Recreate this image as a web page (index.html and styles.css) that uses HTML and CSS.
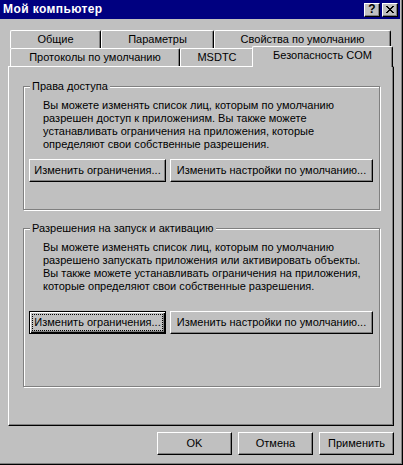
FILE: index.html
```html
<!DOCTYPE html>
<html lang="ru">
<head>
<meta charset="utf-8">
<title>Мой компьютер</title>
<link rel="stylesheet" href="styles.css">
</head>
<body>
<div class="window">
  <div class="frame">
    <div class="titlebar">
      <span class="title">Мой компьютер</span>
      <div class="tbtns">
        <span class="tbtn help">?</span>
        <span class="tbtn close"><svg width="8" height="7" viewBox="0 0 8 7" shape-rendering="crispEdges"><path fill="#000" d="M0 0h2v1h-2zM6 0h2v1h-2zM1 1h2v1h-2zM5 1h2v1h-2zM2 2h4v1h-4zM3 3h2v1h-2zM2 4h4v1h-4zM1 5h2v1h-2zM5 5h2v1h-2zM0 6h2v1h-2zM6 6h2v1h-2z"/></svg></span>
      </div>
    </div>
    <div class="client">
      <div class="tabs">
        <div class="tabrow">
          <div class="tab t-general">Общие</div>
          <div class="tab t-params">Параметры</div>
          <div class="tab t-defprops">Свойства по умолчанию</div>
        </div>
        <div class="tabrow">
          <div class="tab t-protocols">Протоколы по умолчанию</div>
          <div class="tab t-msdtc">MSDTC</div>
          <div class="tab t-com selected">Безопасность COM</div>
        </div>
      </div>
      <div class="panel">
        <div class="group g-access">
          <div class="group-label">Права доступа</div>
          <p class="group-text">Вы можете изменять список лиц, которым по умолчанию<br>разрешен доступ к приложениям. Вы также можете<br>устанавливать ограничения на приложения, которые<br>определяют свои собственные разрешения.</p>
          <div class="btnrow">
            <button class="btn btn-limits">Изменить ограничения...</button>
            <button class="btn btn-defaults">Изменить настройки по умолчанию...</button>
          </div>
        </div>
        <div class="group g-launch">
          <div class="group-label">Разрешения на запуск и активацию</div>
          <p class="group-text">Вы можете изменять список лиц, которым по умолчанию<br>разрешено запускать приложения или активировать объекты.<br>Вы также можете устанавливать ограничения на приложения,<br>которые определяют свои собственные разрешения.</p>
          <div class="btnrow">
            <button class="btn btn-limits default"><span class="focus">Изменить ограничения...</span></button>
            <button class="btn btn-defaults">Изменить настройки по умолчанию...</button>
          </div>
        </div>
      </div>
      <div class="footer">
        <button class="btn btn-foot">OK</button>
        <button class="btn btn-foot">Отмена</button>
        <button class="btn btn-foot">Применить</button>
      </div>
    </div>
  </div>
</div>
</body>
</html>
```
FILE: styles.css
```css
* { box-sizing: border-box; }
html, body { margin: 0; padding: 0; }
body {
  background: #c0c0c0;
  font-family: "Liberation Sans", Arial, sans-serif;
  font-size: 11px;
  line-height: 13px;
  color: #000;
}
.window {
  width: 403px;
  height: 465px;
  border-right: 1px solid #000;
  border-bottom: 1px solid #000;
}
.frame {
  height: 100%;
  border-right: 1px solid #808080;
  border-bottom: 1px solid #808080;
  padding: 0 1px 1px 0;
}
.titlebar {
  height: 19px;
  background: #000080;
  display: flex;
  align-items: center;
  justify-content: space-between;
  padding: 0 2px 0 3px;
}
.title {
  color: #fff;
  font-weight: bold;
  font-size: 12px;
  letter-spacing: 0.4px;
}
.tbtns { display: flex; gap: 2px; }
.tbtn {
  width: 16px;
  height: 14px;
  background: #c0c0c0;
  border: 1px solid;
  border-color: #fff #000 #000 #fff;
  box-shadow: inset -1px -1px 0 #808080;
  display: flex;
  align-items: center;
  justify-content: center;
}
.help {
  font-weight: bold;
  font-size: 12px;
  line-height: 12px;
  padding-bottom: 1px;
}
.close svg { display: block; margin-bottom: 1px; }
.client { padding: 11px 0 0 8px; }
.tabs { width: 386px; padding-left: 2px; }
.tabrow { display: flex; height: 18px; }
.tab {
  height: 18px;
  border: 1px solid;
  border-bottom: 0;
  border-color: #fff #000 #000 #fff;
  border-radius: 2px 2px 0 0;
  box-shadow: inset -1px 0 0 #808080;
  background: #c0c0c0;
  text-align: center;
  padding-top: 2px;
  white-space: nowrap;
}
.t-general { width: 91px; }
.t-params { width: 113px; }
.t-defprops { width: 177px; }
.t-protocols { width: 170px; }
.t-msdtc { width: 74px; }
.t-com { width: 137px; }
.tab.selected {
  position: relative;
  z-index: 2;
  width: 141px;
  height: 21px;
  margin: -2px -2px 0 -2px;
  padding-top: 2px;
}
.panel {
  width: 386px;
  height: 360px;
  border: 1px solid;
  border-color: #fff #000 #000 #fff;
  box-shadow: inset -1px -1px 0 #808080;
  padding: 19px 0 0 14px;
}
.group {
  width: 357px;
  border: 1px solid #808080;
  box-shadow: inset 1px 1px 0 #fff, 1px 1px 0 #fff;
}
.g-access { height: 124px; }
.g-launch { height: 159px; margin-top: 18px; }
.group-label {
  width: max-content;
  margin: -7px 0 0 6px;
  padding: 0 2px;
  background: #c0c0c0;
}
.group-text {
  margin: 6px 0 0 19px;
  white-space: nowrap;
}
.btnrow {
  display: flex;
  gap: 4px;
  margin-left: 5px;
}
.g-access .btnrow { margin-top: 8px; }
.g-launch .btnrow { margin-top: 18px; }
.btn {
  height: 23px;
  padding: 0;
  font: inherit;
  color: #000;
  background: #c0c0c0;
  border: 1px solid;
  border-color: #fff #000 #000 #fff;
  border-radius: 0;
  box-shadow: inset -1px -1px 0 #808080;
  display: flex;
  align-items: center;
  justify-content: center;
  white-space: nowrap;
}
.btn-limits { width: 137px; }
.btn-defaults { width: 203px; }
.btn.default {
  border-color: #000;
  box-shadow: inset 1px 1px 0 #fff, inset -1px -1px 0 #000, inset -2px -2px 0 #808080;
  align-items: stretch;
}
.focus {
  flex: 1;
  margin: 2px;
  border: 1px dotted #000;
  display: flex;
  align-items: center;
  justify-content: center;
}
.footer {
  width: 386px;
  margin-top: 6px;
  display: flex;
  justify-content: flex-end;
  gap: 6px;
}
.btn-foot { width: 75px; }
```
